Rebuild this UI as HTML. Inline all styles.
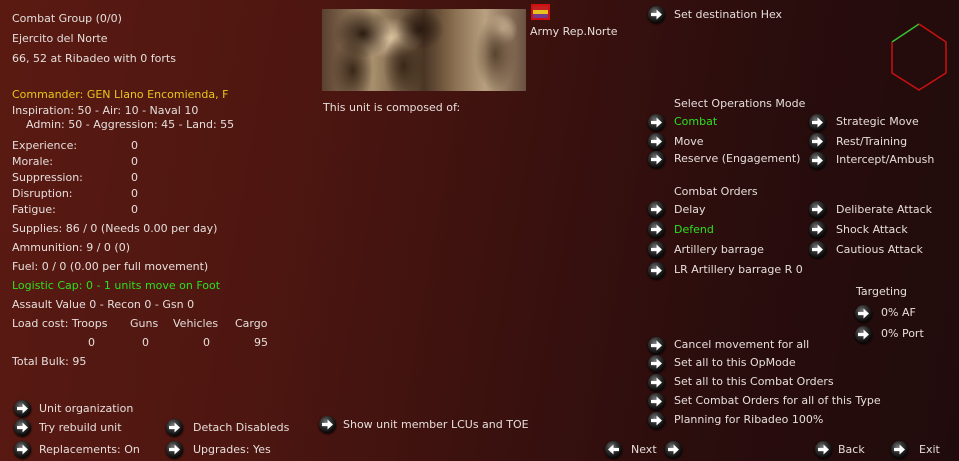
<!DOCTYPE html>
<html><head><meta charset="utf-8"><style>
*{margin:0;padding:0;box-sizing:border-box}
body{width:959px;height:461px;overflow:hidden;position:relative;font-family:"DejaVu Sans","Liberation Sans",sans-serif;font-size:11px;color:#e6dedb;
background:linear-gradient(100deg,#5a1a12 0%,#4e1611 30%,#3a110e 55%,#2a0d0d 75%,#200b0c 100%);}
.t{position:absolute;white-space:nowrap;line-height:14px;top:1px}
.g{color:#2ee01e}.y{color:#e6c81a}
.b{position:absolute;width:17px;height:17px;border-radius:50%;background:radial-gradient(circle at 40% 35%,#777 0%,#333 35%,#0a0a0a 70%,#000 100%);box-shadow:0 1px 2px #000}
.b::after{content:"";position:absolute;left:3px;top:3px;width:11px;height:11px;
background:#fff;clip-path:polygon(0 35%,50% 35%,50% 5%,100% 50%,50% 95%,50% 65%,0 65%)}
.l::after{clip-path:polygon(100% 35%,50% 35%,50% 5%,0 50%,50% 95%,50% 65%,100% 65%)}
</style></head><body>

<div class="t" style="left:12px;top:12px">Combat Group (0/0)</div>
<div class="t" style="left:12px;top:32px">Ejercito del Norte</div>
<div class="t" style="left:12px;top:52px">66, 52 at Ribadeo with 0 forts</div>
<div class="t y" style="left:12px;top:88px">Commander: GEN Llano Encomienda, F</div>
<div class="t" style="left:12px;top:104px">Inspiration: 50 - Air: 10 - Naval 10</div>
<div class="t" style="left:26px;top:118px">Admin: 50 - Aggression: 45 - Land: 55</div>
<div class="t" style="left:12px;top:139px">Experience:</div><div class="t" style="left:131px;top:139px">0</div>
<div class="t" style="left:12px;top:155px">Morale:</div><div class="t" style="left:131px;top:155px">0</div>
<div class="t" style="left:12px;top:171px">Suppression:</div><div class="t" style="left:131px;top:171px">0</div>
<div class="t" style="left:12px;top:187px">Disruption:</div><div class="t" style="left:131px;top:187px">0</div>
<div class="t" style="left:12px;top:203px">Fatigue:</div><div class="t" style="left:131px;top:203px">0</div>
<div class="t" style="left:12px;top:222px">Supplies: 86 / 0 (Needs 0.00 per day)</div>
<div class="t" style="left:12px;top:241px">Ammunition: 9 / 0 (0)</div>
<div class="t" style="left:12px;top:260px">Fuel: 0 / 0 (0.00 per full movement)</div>
<div class="t g" style="left:12px;top:279px">Logistic Cap: 0 - 1 units move on Foot</div>
<div class="t" style="left:12px;top:298px">Assault Value 0 - Recon 0 - Gsn 0</div>
<div class="t" style="left:12px;top:317px">Load cost: Troops</div>
<div class="t" style="left:130px;top:317px">Guns</div>
<div class="t" style="left:173px;top:317px">Vehicles</div>
<div class="t" style="left:235px;top:317px">Cargo</div>
<div class="t" style="left:88px;top:336px">0</div>
<div class="t" style="left:142px;top:336px">0</div>
<div class="t" style="left:203px;top:336px">0</div>
<div class="t" style="left:254px;top:336px">95</div>
<div class="t" style="left:12px;top:355px">Total Bulk: 95</div>

<div class="b" style="left:14px;top:400px"></div><div class="t" style="left:39px;top:402px">Unit organization</div>
<div class="b" style="left:14px;top:419px"></div><div class="t" style="left:39px;top:421px">Try rebuild unit</div>
<div class="b" style="left:14px;top:441px"></div><div class="t" style="left:39px;top:443px">Replacements: On</div>
<div class="b" style="left:166px;top:419px"></div><div class="t" style="left:193px;top:421px">Detach Disableds</div>
<div class="b" style="left:166px;top:441px"></div><div class="t" style="left:193px;top:443px">Upgrades: Yes</div>
<div class="b" style="left:319px;top:416px"></div><div class="t" style="left:343px;top:418px">Show unit member LCUs and TOE</div>

<div style="position:absolute;left:322px;top:9px;width:204px;height:82px;background:
radial-gradient(ellipse 14% 30% at 20% 30%,#2a1a10,transparent),
radial-gradient(ellipse 12% 25% at 48% 25%,#2a1a10,transparent),
radial-gradient(ellipse 10% 40% at 40% 70%,#3a2818,transparent),
radial-gradient(ellipse 10% 40% at 15% 75%,#3a2818,transparent),
radial-gradient(ellipse 18% 25% at 32% 35%,#e0c8a4,transparent),
radial-gradient(ellipse 10% 45% at 85% 55%,#5a4430,transparent),
radial-gradient(ellipse 8% 20% at 88% 25%,#d8c0a0,transparent),
linear-gradient(90deg,#5a4030,#a8906e 25%,#4a3424 50%,#8a7050 65%,#b8a080 80%,#6a5040);"></div>
<div style="position:absolute;left:531px;top:4px;width:19px;height:16px;border:2px solid #d01010;background:linear-gradient(#c42020 0 33%,#e8c020 33% 66%,#7a3a8a 66%)"></div>
<div class="t" style="left:530px;top:25px">Army Rep.Norte</div>
<div class="t" style="left:323px;top:101px">This unit is composed of:</div>

<div class="b" style="left:648px;top:6px"></div><div class="t" style="left:674px;top:8px">Set destination Hex</div>
<svg style="position:absolute;left:880px;top:15px" width="79" height="85"><path d="M12 27 L39 9" stroke="#3ac030" stroke-width="1.5" fill="none"/><path d="M39 9 L66 27 L66 58 L39 75 L12 58 L12 27" stroke="#cc1010" stroke-width="1.5" fill="none"/></svg>

<div class="t" style="left:674px;top:97px">Select Operations Mode</div>
<div class="b" style="left:648px;top:114px"></div><div class="t g" style="left:674px;top:115px">Combat</div>
<div class="b" style="left:648px;top:133px"></div><div class="t" style="left:674px;top:135px">Move</div>
<div class="b" style="left:648px;top:151px"></div><div class="t" style="left:674px;top:152px">Reserve (Engagement)</div>
<div class="b" style="left:809px;top:114px"></div><div class="t" style="left:836px;top:115px">Strategic Move</div>
<div class="b" style="left:809px;top:133px"></div><div class="t" style="left:836px;top:135px">Rest/Training</div>
<div class="b" style="left:809px;top:152px"></div><div class="t" style="left:836px;top:153px">Intercept/Ambush</div>

<div class="t" style="left:674px;top:185px">Combat Orders</div>
<div class="b" style="left:648px;top:201px"></div><div class="t" style="left:674px;top:203px">Delay</div>
<div class="b" style="left:648px;top:221px"></div><div class="t g" style="left:674px;top:223px">Defend</div>
<div class="b" style="left:648px;top:241px"></div><div class="t" style="left:674px;top:243px">Artillery barrage</div>
<div class="b" style="left:648px;top:262px"></div><div class="t" style="left:674px;top:263px">LR Artillery barrage R 0</div>
<div class="b" style="left:809px;top:201px"></div><div class="t" style="left:836px;top:203px">Deliberate Attack</div>
<div class="b" style="left:809px;top:221px"></div><div class="t" style="left:836px;top:223px">Shock Attack</div>
<div class="b" style="left:809px;top:241px"></div><div class="t" style="left:836px;top:243px">Cautious Attack</div>

<div class="t" style="left:856px;top:285px">Targeting</div>
<div class="b" style="left:855px;top:305px"></div><div class="t" style="left:881px;top:306px">0% AF</div>
<div class="b" style="left:855px;top:326px"></div><div class="t" style="left:881px;top:327px">0% Port</div>

<div class="b" style="left:648px;top:337px"></div><div class="t" style="left:674px;top:338px">Cancel movement for all</div>
<div class="b" style="left:648px;top:355px"></div><div class="t" style="left:674px;top:356px">Set all to this OpMode</div>
<div class="b" style="left:648px;top:374px"></div><div class="t" style="left:674px;top:375px">Set all to this Combat Orders</div>
<div class="b" style="left:648px;top:393px"></div><div class="t" style="left:674px;top:394px">Set Combat Orders for all of this Type</div>
<div class="b" style="left:648px;top:412px"></div><div class="t" style="left:674px;top:413px">Planning for Ribadeo 100%</div>

<div class="b l" style="left:605px;top:441px"></div><div class="t" style="left:631px;top:443px">Next</div>
<div class="b" style="left:665px;top:441px"></div>
<div class="b" style="left:815px;top:441px"></div><div class="t" style="left:838px;top:443px">Back</div>
<div class="b" style="left:891px;top:441px"></div><div class="t" style="left:919px;top:443px">Exit</div>
</body></html>
